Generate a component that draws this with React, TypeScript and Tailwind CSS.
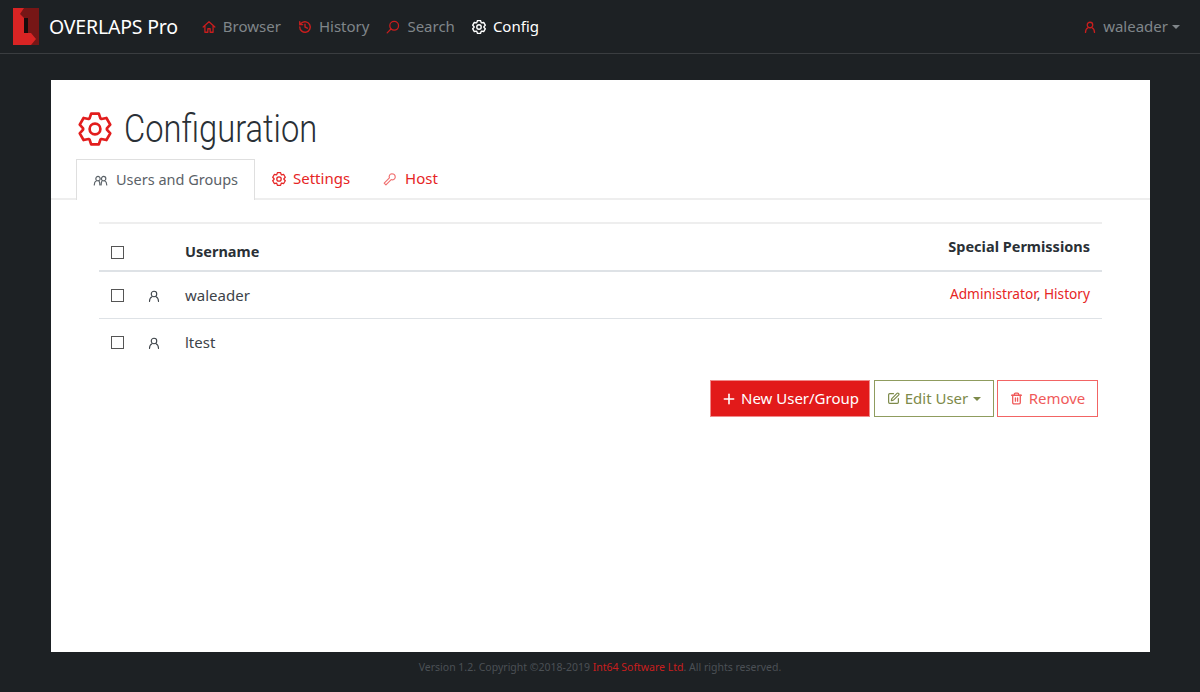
import React from "react";
import { Plus, Trash2, SquarePen } from "lucide-react";

const S = { fontFamily: '"Noto Sans", sans-serif' };

function Ic({ children, className = "", size = 14, sw = 1.6 }: { children: React.ReactNode; className?: string; size?: number; sw?: number }) {
  return (
    <svg width={size} height={size} viewBox="0 0 24 24" fill="none" stroke="currentColor" strokeWidth={sw} strokeLinecap="round" strokeLinejoin="round" className={"shrink-0 " + className}>
      {children}
    </svg>
  );
}

const gearPoints = Array.from({ length: 6 }, (_, i) => {
  const a = i * 60 - 90;
  return [
    [a - 27, 8.4],
    [a - 14, 11.2],
    [a + 14, 11.2],
    [a + 27, 8.4],
  ];
})
  .flat()
  .map(([d, r]) => `${(12 + r * Math.cos((d * Math.PI) / 180)).toFixed(2)},${(12 + r * Math.sin((d * Math.PI) / 180)).toFixed(2)}`)
  .join(" ");

function Gear({ className = "", size = 14, sw = 1.8 }: { className?: string; size?: number; sw?: number }) {
  return (
    <svg width={size} height={size} viewBox="0 0 24 24" fill="none" stroke="currentColor" strokeWidth={sw} strokeLinejoin="round" className={"shrink-0 " + className}>
      <polygon points={gearPoints} />
      <circle cx="12" cy="12" r="3.8" />
    </svg>
  );
}

function User({ className = "", size = 12, sw = 2 }: { className?: string; size?: number; sw?: number }) {
  return (
    <Ic className={className} size={size} sw={sw}>
      <circle cx="12" cy="8" r="5.5" />
      <path d="M3 23c0-5 2-8 5-9.5M21 23c0-5-2-8-5-9.5" />
    </Ic>
  );
}

function Logo() {
  return (
    <svg width="26" height="37" viewBox="0 0 26 37" className="shrink-0">
      <rect width="26" height="37" fill="#761616" />
      <path d="M0 0H11L7 6L11 10V25H18L23 31L18 37H0Z" fill="#d92424" />
      <rect x="11" y="10" width="4" height="15" fill="#160c0c" />
    </svg>
  );
}

function Caret({ className = "" }: { className?: string }) {
  return <span className={"inline-block w-0 h-0 border-x-[4px] border-x-transparent border-t-[4px] " + className} />;
}

function NavItem({ icon, label, active }: { icon: React.ReactNode; label: string; active?: boolean }) {
  return (
    <a className={"flex items-center gap-[7px] text-[15px] " + (active ? "text-white" : "text-[#80868a]")}>
      {icon}
      {label}
    </a>
  );
}

function Check() {
  return <span className="block w-[13px] h-[13px] border-[1.5px] border-[#555]" />;
}

export default function App() {
  return (
    <div className="h-[692px] bg-[#1d2124] flex flex-col overflow-hidden" style={S}>
      <nav className="h-[54px] shrink-0 border-b border-[#3a3d40] flex items-center pl-[13px] pr-[20px]">
        <Logo />
        <span className="ml-[10px] text-white text-[19.5px] tracking-[-0.2px]">OVERLAPS Pro</span>
        <div className="ml-[24px] flex items-center gap-[17px]">
          <NavItem
            label="Browser"
            icon={
              <Ic className="text-[#c81e1e]" size={14} sw={2.2}>
                <path d="M2 12 12 3l10 9M5 10v11h5v-6h4v6h5V10" />
              </Ic>
            }
          />
          <NavItem
            label="History"
            icon={
              <Ic className="text-[#c81e1e]" size={14} sw={2.4}>
                <path d="M3 12a9 9 0 1 0 3-6.7L3 8M3 3v5h5M12 7v5l4 2" />
              </Ic>
            }
          />
          <NavItem
            label="Search"
            icon={
              <Ic className="text-[#c81e1e]" size={14} sw={2.2}>
                <circle cx="14" cy="10" r="7.5" />
                <path d="M8.5 15.5 2 22" />
              </Ic>
            }
          />
          <NavItem active label="Config" icon={<Gear size={14} sw={2.4} className="text-white" />} />
        </div>
        <div className="ml-auto flex items-center text-[15px] text-[#80868a]">
          <User className="text-[#c81e1e] mr-[7px]" size={12} sw={2.6} />
          waleader
          <Caret className="border-t-[#80868a] ml-[4px]" />
        </div>
      </nav>

      <main className="mx-[51px] mt-[26px] h-[572px] w-[1099px] bg-white shrink-0">
        <div className="pt-[19px] pl-[27px] flex items-center h-[79px]">
          <Gear size={34} sw={1.9} className="text-[#e21d1d]" />
          <h1 className="ml-[12px] text-[38px] leading-none text-[#2a3036] scale-x-[0.86] origin-left font-light" style={{ fontFamily: '"Roboto", sans-serif' }}>
            Configuration
          </h1>
        </div>
        <div className="h-[41px] border-b-2 border-[#eeeeee] flex pl-[25px] text-[15px]">
          <div className="h-[41px] w-[179px] bg-white border border-[#dfdfdf] border-b-0 flex items-center justify-center gap-[8px] text-[#5b6268] text-[14.5px]">
            <Ic size={15} sw={1.9}>
              <circle cx="8" cy="9" r="3.5" />
              <circle cx="17" cy="9" r="3.5" />
              <path d="M2 19c0-4 1.5-5.5 3.5-6.5M11 19c0-3-.5-5-1.5-6.5M13 19c0-3 .5-5 1.500-6.5M22 19c0-4-1.500-5.500-3.500-6.500" />
            </Ic>
            Users and Groups
          </div>
          <div className="ml-[17px] flex items-center gap-[7px] text-[#e62525]">
            <Gear size={14} sw={2.2} />
            Settings
          </div>
          <div className="ml-[33px] flex items-center gap-[8px] text-[#e62525]">
            <Ic size={14} className="text-[#f07070]" sw={2}>
              <path d="M15 3a6 6 0 0 1 6 6 5 5 0 0 1-7 4L5 22l-3-3 9-9a5 5 0 0 1 4-7z" />
            </Ic>
            Host
          </div>
        </div>

        <div className="mx-[48px] mt-[22px] w-[1003px]">
          <table className="w-full border-collapse text-[15px] text-[#3d4349]">
            <thead>
              <tr className="border-t-2 border-[#eeeeee] border-b-2 border-b-[#dee2e6] h-[48px] text-[14.5px]">
                <th className="w-[37px] pl-[12px] pt-[10px] align-middle">
                  <Check />
                </th>
                <th className="w-[49px]" />
                <th className="text-left font-bold pt-[10px] text-[#2a3036]">Username</th>
                <th className="text-right font-bold pr-[12px] align-middle text-[#2a3036] pb-[1px]">Special Permissions</th>
              </tr>
            </thead>
            <tbody>
              <tr className="border-b border-[#dee2e6] h-[47px]">
                <td className="pl-[12px] pt-[2px]">
                  <Check />
                </td>
                <td className="pl-[12px] pt-[2px]">
                  <User className="text-[#3d4349]" size={12} sw={2.2} />
                </td>
                <td>waleader</td>
                <td className="text-right pr-[12px] text-[13.7px]">
                  <span className="text-[#e62525]">Administrator</span>, <span className="text-[#e62525]">History</span>
                </td>
              </tr>
              <tr className="h-[47px]">
                <td className="pl-[12px] pt-[2px]">
                  <Check />
                </td>
                <td className="pl-[12px] pt-[2px]">
                  <User className="text-[#3d4349]" size={12} sw={2.2} />
                </td>
                <td>ltest</td>
                <td />
              </tr>
            </tbody>
          </table>
          <div className="mt-[15px] flex justify-end pr-[4px] text-[15px]">
            <button className="h-[37px] w-[160px] bg-[#e21a1a] border border-[#f08a8a] text-white flex items-center justify-center gap-[4px]">
              <Plus size={16} strokeWidth={2.4} />
              New User/Group
            </button>
            <button className="ml-[4px] h-[37px] w-[120px] bg-white border border-[#8f9c5e] text-[#7d8a4a] flex items-center justify-center gap-[5px]">
              <SquarePen size={13} strokeWidth={2.2} />
              Edit User
              <Caret className="border-t-[#7d8a4a]" />
            </button>
            <button className="ml-[3px] h-[37px] w-[101px] bg-white border border-[#f26464] text-[#f05a5a] flex items-center justify-center gap-[6px]">
              <Trash2 size={13} strokeWidth={2.4} />
              Remove
            </button>
          </div>
        </div>
      </main>

      <footer className="mt-[8px] text-center text-[10.5px] text-[#4b5055]">
        Version 1.2. Copyright ©2018-2019 <span className="text-[#c81e1e]">Int64 Software Ltd</span>. All rights reserved.
      </footer>
    </div>
  );
}
